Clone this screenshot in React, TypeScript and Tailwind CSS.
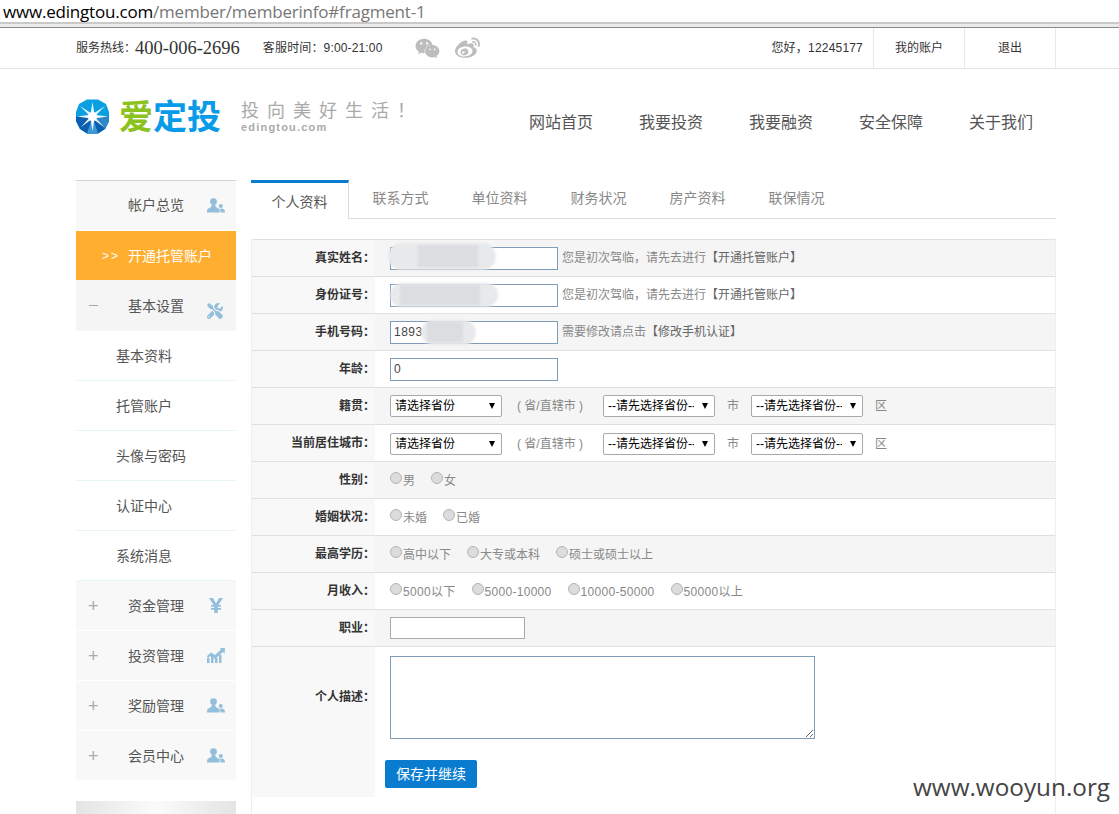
import * as React from "react";
import { FaWeibo, FaWeixin, FaTools } from "react-icons/fa";

const cjk = "font-['Liberation_Sans','Noto_Sans_CJK_SC',sans-serif]";

function PeopleIcon() {
	return (
		<svg width="18" height="15" viewBox="0 0 18 15" fill="#93bfdd">
			<circle cx="6.5" cy="3.6" r="3.4" />
			<path d="M4.8 6.5h3.4l.6 2.6 3 1.6c.8.5 1 2 1 3.8H0c0-1.8.2-3.3 1-3.8l3.2-1.6z" />
			<circle cx="13.8" cy="8" r="2" />
			<path d="M12.5 10.2l1.3 1 1.3-1 2 1.2c.6.4.9 1.6.9 3.1h-4.3c0-1.500-.4-3-1.700-3.600z" />
		</svg>
	);
}

function ChartIcon() {
	return (
		<svg width="18" height="15" viewBox="0 0 18 15" fill="#93bfdd">
			<rect x="0" y="10" width="2.500" height="5" />
			<rect x="4" y="8" width="2.500" height="7" />
			<rect x="8" y="9.500" width="2.500" height="5.500" />
			<rect x="12" y="7" width="2.500" height="8" />
			<path d="M0 8l4-3.500 4 2.500 6-5.500-1.500-1.300L18 0l-.4 5.500-1.600-1.600-8 7-3.700-3.200L.8 10z" />
		</svg>
	);
}

function YenIcon() {
	return (
		<svg width="14" height="15" viewBox="0 0 14 15" fill="#93bfdd">
			<path d="M0 0h4l3 5.500L10 0h4L9.500 7H12v1.800H8.800V10H12v1.800H8.800V15H5.200v-3.200H2V10h3.200V8.800H2V7h2.500z" />
		</svg>
	);
}

function Logo() {
	return (
		<svg width="33" height="35" viewBox="0 0 33 35" className="shrink-0">
			<polygon points="11,0.500 22,0.500 30,5 33,13 33,22 29,30 22,34.500 11,34.500 4,30 0,22 0,13 3,5" fill="#0a9fe0" />
			<polygon points="0,17.500 33,17.500 33,22 29,30 22,34.500 11,34.500 4,30 0,22" fill="#0a5fae" />
			<polygon points="16.500,17.500 22,34.500 11,34.500" fill="#3f97d6" />
			<polygon points="16.500,17.500 33,17.500 33,22 29,30" fill="#2f86c8" />
			<polygon points="16.500,3 18.300,14 29,7 20,16 32,17.500 20,19.300 28,28 18.300,21 16.500,32 14.700,21 5,28 13,19.300 1,17.500 13,16 4,7 14.700,14" fill="#ffffff" opacity="0.92" />
			<circle cx="16.500" cy="17.500" r="4.500" fill="#ffffff" />
		</svg>
	);
}

const subMenu = ["基本资料", "托管账户", "头像与密码", "认证中心", "系统消息"];
const sideBottom = [
	{ label: "资金管理", icon: <YenIcon /> },
	{ label: "投资管理", icon: <ChartIcon /> },
	{ label: "奖励管理", icon: <PeopleIcon /> },
	{ label: "会员中心", icon: <PeopleIcon /> },
];

function Sidebar() {
	return (
		<aside className="w-40 shrink-0 text-sm text-[#555]">
			<div className="border-t border-[#d4d4d4]">
				<div className="flex h-[49px] items-center bg-[#f8f8f8] pb-px">
					<span className="ml-[52px] w-[79px]">帐户总览</span>
					<PeopleIcon />
				</div>
				<div className="mt-px flex h-[49px] items-center bg-[#ffae30] text-white">
					<span className="ml-[26px] w-[26px] text-xs tracking-[2px]">&gt;&gt;</span>
					<span>开通托管账户</span>
				</div>
				<div className="relative flex h-[51px] items-center bg-[#f5f5f5]">
					<span className="ml-[13px] h-px w-[9px] bg-[#aaa]" />
					<span className="ml-[30px]">基本设置</span>
					<FaTools className="absolute left-[131px] top-[23px] text-[16px] text-[#93bfdd]" />
				</div>
			</div>
			{subMenu.map((s) => (
				<div key={s} className="flex h-[50px] items-center border-b border-[#e8f6fa] pl-10">
					{s}
				</div>
			))}
			{sideBottom.map((s) => (
				<div key={s.label} className="flex h-[50px] items-center border-b border-white bg-[#f8f8f8] last:h-[49px] last:border-b-0">
					<span className="ml-[12px] w-[40px] text-lg font-light leading-none text-[#aaa]">+</span>
					<span className="w-[79px]">{s.label}</span>
					<span className="flex w-[18px] justify-center">{s.icon}</span>
				</div>
			))}
			<div className="mt-5 h-[60px] bg-gradient-to-r from-[#e4e4e4] via-[#fbfbfb] to-[#e4e4e4]" />
		</aside>
	);
}

function Row({
	label,
	alt,
	children,
	className,
}: {
	label: string;
	alt?: boolean;
	children: React.ReactNode;
	className?: string;
}) {
	return (
		<div className={`grid h-[37px] grid-cols-[123px_1fr] border-b border-[#e0e0e0] ${alt ? "bg-[#f5f5f5]" : "bg-white"}`}>
			<div className="flex items-center justify-end bg-[#f8f8f8] text-xs font-bold text-[#333]">{label}：</div>
			<div className={`flex items-center pl-[15px] text-xs text-[#888] ${className ?? ""}`}>{children}</div>
		</div>
	);
}

function Blob({ className, inner }: { className: string; inner: string }) {
	return (
		<div className={`absolute rounded-full bg-[#e8e9eb] blur-[1px] ${className}`}>
			<div className={`absolute bg-[#dcdde0] ${inner}`} />
		</div>
	);
}

function TextBox({ value, blob }: { value?: string; blob?: React.ReactNode }) {
	return (
		<div className="relative">
			<input
				readOnly
				value={value ?? ""}
				className="block h-[23px] w-[168px] border border-[#7f9db9] bg-white px-[3px] text-xs tracking-[0.5px] text-[#444] outline-none"
			/>
			{blob}
		</div>
	);
}

function Hint({ text, link }: { text: string; link: string }) {
	return (
		<span className="ml-1">
			{text}
			<span className="text-[#666]">【{link}】</span>
		</span>
	);
}

function AreaSelect({ first }: { first: string }) {
	return (
		<div className="relative">
			<select className="block h-[22px] w-[112px] appearance-none rounded-[2px] border border-[#a9a9a9] bg-white pl-1 pr-5 text-xs text-black">
				<option>{first}</option>
			</select>
			<span className="pointer-events-none absolute right-[7px] top-[8px] size-0 border-x-[3px] border-t-[6px] border-x-transparent border-t-black" />
		</div>
	);
}

function AreaRow({ label, alt, className }: { label: string; alt?: boolean; className?: string }) {
	return (
		<Row label={label} alt={alt} className={className}>
			<AreaSelect first="请选择省份" />
			<span className="ml-[15px] w-[86px]">( 省/直辖市 )</span>
			<AreaSelect first="--请先选择省份--" />
			<span className="ml-3 w-6">市</span>
			<AreaSelect first="--请先选择省份--" />
			<span className="ml-3">区</span>
		</Row>
	);
}

function Radios({ items }: { items: string[] }) {
	return (
		<div className="flex items-center gap-4">
			{items.map((t) => (
				<label key={t} className="flex items-center">
					<input
						type="radio"
						disabled
						className="-mt-1 mr-px size-3 appearance-none rounded-full border border-[#b5b5b5] bg-[#dcdcdc]"
					/>
					<span className="mt-px">{t}</span>
				</label>
			))}
		</div>
	);
}

function ProfileForm() {
	return (
		<div className="mt-5 border-t border-[#e0e0e0]">
			<Row label="真实姓名" alt>
				<TextBox
					blob={<Blob className="left-[-2px] top-[-4px] h-[27px] w-[108px]" inner="left-[30px] top-[2px] h-[22px] w-[60px]" />}
				/>
				<Hint text="您是初次驾临，请先去进行" link="开通托管账户" />
			</Row>
			<Row label="身份证号">
				<TextBox
					blob={<Blob className="left-0 top-[-1px] h-[24px] w-[108px]" inner="left-[10px] top-[2px] h-[20px] w-[80px]" />}
				/>
				<Hint text="您是初次驾临，请先去进行" link="开通托管账户" />
			</Row>
			<Row label="手机号码" alt>
				<TextBox
					value="1893"
					blob={<Blob className="left-[31px] top-[-1px] h-[25px] w-[55px]" inner="left-[6px] top-[2px] h-[20px] w-[36px]" />}
				/>
				<Hint text="需要修改请点击" link="修改手机认证" />
			</Row>
			<Row label="年龄">
				<TextBox value="0" />
			</Row>
			<AreaRow label="籍贯" alt />
			<AreaRow label="当前居住城市" className="pt-0.5" />
			<Row label="性别" alt>
				<Radios items={["男", "女"]} />
			</Row>
			<Row label="婚姻状况">
				<Radios items={["未婚", "已婚"]} />
			</Row>
			<Row label="最高学历" alt>
				<Radios items={["高中以下", "大专或本科", "硕士或硕士以上"]} />
			</Row>
			<Row label="月收入" className="tracking-[0.3px]">
				<Radios items={["5000以下", "5000-10000", "10000-50000", "50000以上"]} />
			</Row>
			<Row label="职业" alt>
				<input readOnly className="h-[22px] w-[135px] border border-[#aaa] bg-white outline-none" />
			</Row>
			<div className="grid h-[150px] grid-cols-[123px_1fr]">
				<div className="bg-[#f8f8f8] pt-[42px] text-right text-xs font-bold text-[#333]">个人描述：</div>
				<div className="pl-[10px] pt-[9px]">
					<textarea className="ml-[5px] block h-[83px] w-[425px] border border-[#7f9db9] bg-white outline-none" />
					<button className="mt-[21px] h-7 w-[92px] rounded-[2px] bg-[#0a7cd0] text-sm text-white">保存并继续</button>
				</div>
			</div>
		</div>
	);
}

const tabs = ["联系方式", "单位资料", "财务状况", "房产资料", "联保情况"];

export default function App() {
	return (
		<div className={`relative h-[814px] overflow-hidden bg-white ${cjk}`}>
			{/* browser address bar */}
			<div className="flex h-[22px] items-center pl-[3px] font-['Open_Sans',sans-serif] text-[17px] leading-none tracking-[-0.2px] text-[#777]">
				<span className="text-black">www.edingtou.com</span>/member/memberinfo#fragment-1
			</div>
			<div className="h-[6px] border-t-2 border-b border-t-[#c9c9c9] border-b-[#888] bg-[#ececec]" />

			<div className="h-[41px] border-b border-[#e2e2e2]">
				<div className="ml-[76px] flex h-10 w-[980px] items-center text-xs text-[#333]">
					<span>服务热线：</span>
					<span className="ml-[-1px] font-['Liberation_Serif',serif] text-[18.500px] leading-none">400-006-2696</span>
					<span className="ml-[23px] tracking-[0.15px]">客服时间：9:00-21:00</span>
					<FaWeixin className="ml-[33px] text-[25px] text-[#bdbdbd]" />
					<FaWeibo className="ml-[15px] text-[25px] text-[#bdbdbd]" />
					<span className="ml-auto pr-[10px] tracking-[0.2px]">您好，12245177</span>
					<span className="flex h-full w-[91px] items-center justify-center border-l border-[#e8e8e8]">我的账户</span>
					<span className="flex h-full w-[92px] items-center justify-center border-x border-[#e8e8e8]">退出</span>
				</div>
			</div>

			<div className="ml-[76px] flex h-[111px] w-[980px] items-start">
				<div className="mt-[30px]">
					<Logo />
				</div>
				<div className="mt-[22px] ml-[10px] flex text-[34px] font-bold leading-[52px]">
					<span className="text-[#8cc220]">爱</span>
					<span className="text-[#0a9be8]">定投</span>
				</div>
				<div className="ml-5 mt-[32px]">
					<div className="text-[18px] leading-5 tracking-[8px] text-[#aaa]">投向美好生活！</div>
					<div className="font-['Liberation_Sans',sans-serif] text-[11px] font-bold leading-3 tracking-[1.2px] text-[#aaa]">edingtou.com</div>
				</div>
				<nav className="ml-auto mr-[23px] mt-[42px] flex gap-[46px] text-base text-[#555]">
					<span>网站首页</span>
					<span>我要投资</span>
					<span>我要融资</span>
					<span>安全保障</span>
					<span>关于我们</span>
				</nav>
			</div>

			<div className="ml-[76px] flex w-[980px] gap-[15px]">
				<Sidebar />
				<main className="w-[805px]">
					<div className="flex h-[39px] border-b border-[#dcdcdc] text-sm text-[#888]">
						<div className="z-10 flex h-[39px] w-[98px] justify-center border-t-[3px] border-r border-t-[#0a7cd0] border-r-[#dcdcdc] bg-white pt-[9px] text-[#555]">
							个人资料
						</div>
						<div className="ml-[2px] flex">
							{tabs.map((t) => (
								<div key={t} className="flex w-[99px] justify-center pt-2">
									{t}
								</div>
							))}
						</div>
					</div>
					<div className="min-h-[600px] border-x border-[#eee]">
						<ProfileForm />
					</div>
				</main>
			</div>

			{/* screenshot watermark */}
			<div className="absolute left-[913px] top-[769px] font-['Open_Sans',sans-serif] text-[24.300px] text-[#444]">www.wooyun.org</div>
		</div>
	);
}
